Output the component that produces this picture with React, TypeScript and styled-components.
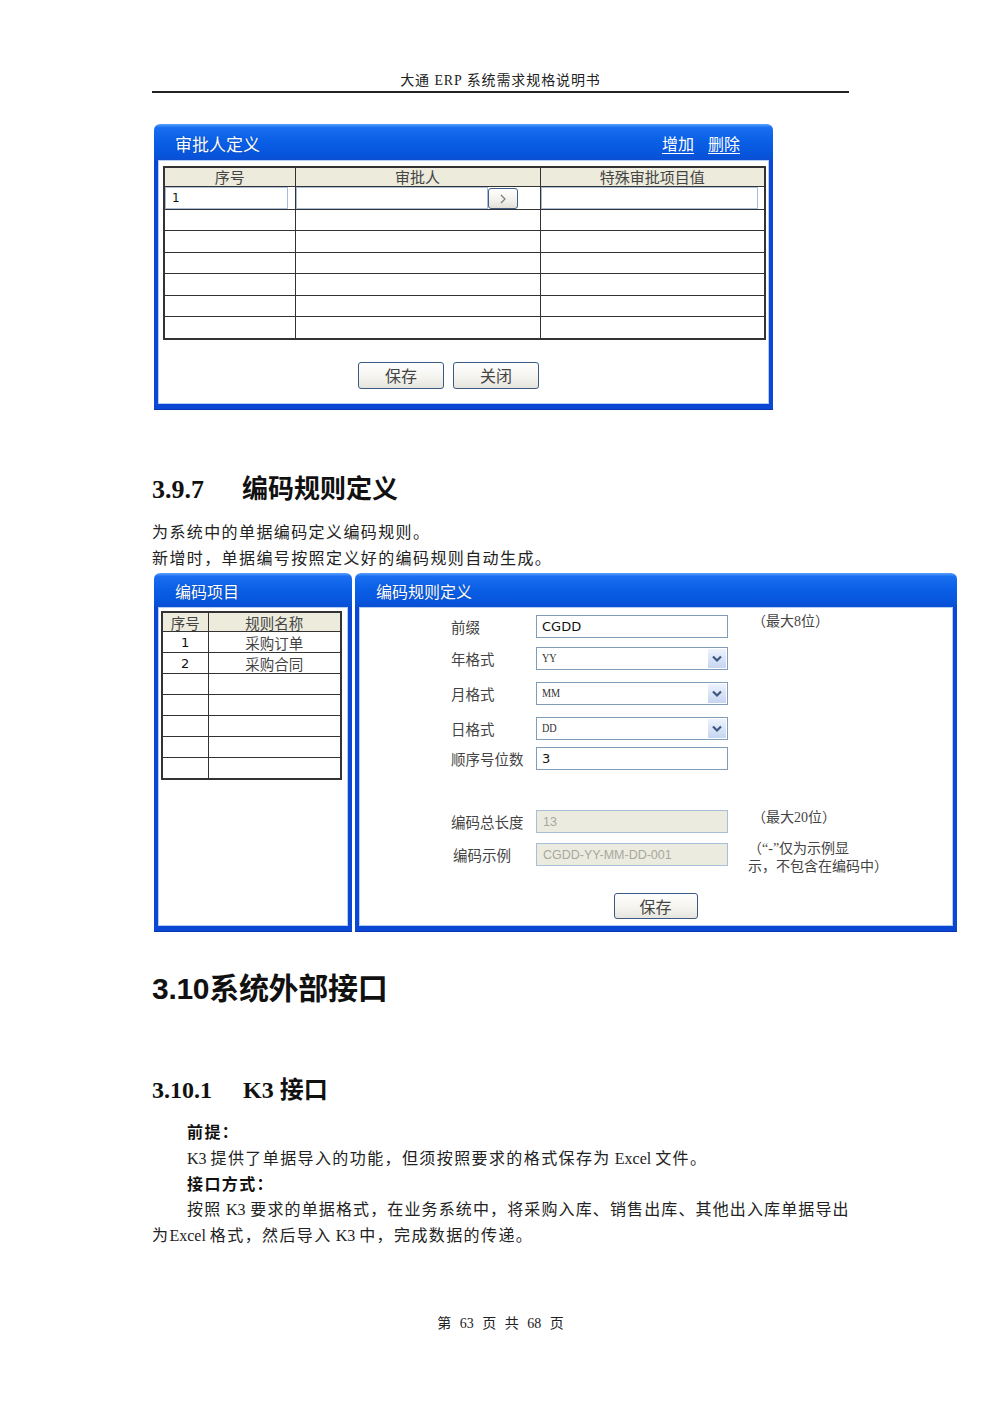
import * as React from 'react'
import styled, { createGlobalStyle } from 'styled-components'

const UI_FONT = `'Noto Sans CJK SC', 'Liberation Sans', sans-serif`
const DOC_FONT = `'Liberation Serif', 'Noto Sans CJK SC', serif`

const GlobalStyle = createGlobalStyle`
  html, body {
    margin: 0;
    padding: 0;
    background: #fff;
  }
  body {
    font-family: ${DOC_FONT};
    color: #111;
  }
`

export default function App() {
  return (
    <>
      <GlobalStyle />
      <Page>
        <RunningHead>大通 ERP 系统需求规格说明书</RunningHead>

        <ApproverWindow />

        <H3>
          <Num $w={90}>3.9.7</Num>编码规则定义
        </H3>
        <Para $mt={14}>为系统中的单据编码定义编码规则。</Para>
        <Para>新增时，单据编号按照定义好的编码规则自动生成。</Para>

        <CodeRuleWindows />

        <H2>3.10系统外部接口</H2>

        <H4>
          <Num $w={91}>3.10.1</Num>K3 接口
        </H4>

        <Body>
          <Label>前提：</Label>
          <Indented>
            <Lat>K3 </Lat>提供了单据导入的功能，但须按照要求的格式保存为<Lat> Excel </Lat>文件。
          </Indented>
          <Label>接口方式：</Label>
          <JustifiedLine>
            按照<Lat> K3 </Lat>要求的单据格式，在业务系统中，将采购入库、销售出库、其他出入库单据导出
          </JustifiedLine>
          <Line>
            为<Lat>Excel </Lat>格式，然后导入<Lat> K3 </Lat>中，完成数据的传递。
          </Line>
        </Body>

        <Footer>第 63 页 共 68 页</Footer>
      </Page>
    </>
  )
}

/* ---------- 审批人定义 ---------- */

const ApproverWindow = () => (
  <Window $w={619} $mt={31} $ml={2}>
    <TitleBar $h={36} $padR={33}>
      <TitleText $size={17}>审批人定义</TitleText>
      <TitleLinks>
        <TitleLink>增加</TitleLink>
        <TitleLink>删除</TitleLink>
      </TitleLinks>
    </TitleBar>
    <Frame>
      <WinBody $h={244}>
        <ApproverTable>
          <colgroup>
            <col style={{ width: 131 }} />
            <col style={{ width: 245 }} />
            <col style={{ width: 225 }} />
          </colgroup>
          <thead>
            <tr>
              <HeadCell>序号</HeadCell>
              <HeadCell>审批人</HeadCell>
              <HeadCell>特殊审批项目值</HeadCell>
            </tr>
          </thead>
          <tbody>
            <InputRow>
              <td>
                <CellInput readOnly defaultValue="1" $right={7} />
              </td>
              <td>
                <LookupWrap>
                  <CellInput readOnly defaultValue="" $right={0} />
                  <LookupButton>
                    <svg width="10" height="12" viewBox="0 0 10 12">
                      <path d="M3 2 L7 6 L3 10" fill="none" stroke="#7a7a7a" strokeWidth="1.2" />
                    </svg>
                  </LookupButton>
                  <LookupGap />
                </LookupWrap>
              </td>
              <td>
                <CellInput readOnly defaultValue="" $right={6} />
              </td>
            </InputRow>
            {[0, 1, 2, 3, 4, 5].map(i => (
              <EmptyRow key={i} $h={i % 2 === 0 ? 21 : 22}>
                <td />
                <td />
                <td />
              </EmptyRow>
            ))}
          </tbody>
        </ApproverTable>
        <ButtonRow>
          <PushButton $w={86} $h={27}>保存</PushButton>
          <PushButton $w={86} $h={27}>关闭</PushButton>
        </ButtonRow>
      </WinBody>
    </Frame>
  </Window>
)

/* ---------- 编码规则 ---------- */

const rules = [
  { no: '1', name: '采购订单' },
  { no: '2', name: '采购合同' }
]

const ChevronDown = () => (
  <svg width="12" height="10" viewBox="0 0 12 10">
    <path d="M2 2.5 L6 6.5 L10 2.5" fill="none" stroke="#3f5680" strokeWidth="2.2" />
  </svg>
)

const CodeRuleWindows = () => (
  <WindowPair>
    <Window $w={198} $mt={0}>
      <TitleBar $h={34} $padR={20}>
        <TitleText $size={16}>编码项目</TitleText>
      </TitleBar>
      <Frame>
        <WinBody $h={319}>
          <RuleTable>
            <colgroup>
              <col style={{ width: 46 }} />
              <col style={{ width: 133 }} />
            </colgroup>
            <thead>
              <tr>
                <RuleHead>序号</RuleHead>
                <RuleHead>规则名称</RuleHead>
              </tr>
            </thead>
            <tbody>
              {Array.from({ length: 7 }).map((_, i) => (
                <EmptyRow key={i} $h={21}>
                  <RuleNo>{rules[i] ? rules[i].no : ''}</RuleNo>
                  <RuleName>{rules[i] ? rules[i].name : ''}</RuleName>
                </EmptyRow>
              ))}
            </tbody>
          </RuleTable>
        </WinBody>
      </Frame>
    </Window>

    <Window $w={602} $mt={0}>
      <TitleBar $h={34} $padR={20}>
        <TitleText $size={16}>编码规则定义</TitleText>
      </TitleBar>
      <Frame>
        <WinBody $h={319}>
          <Form>
            <FieldRow $mt={0}>
              <FieldLabel>前缀</FieldLabel>
              <TextBox readOnly defaultValue="CGDD" />
              <Hint $mt={-1}>（最大8位）</Hint>
            </FieldRow>
            <FieldRow $mt={9}>
              <FieldLabel>年格式</FieldLabel>
              <SelectBox>
                <SelectText>YY</SelectText>
                <ArrowBox>
                  <ChevronDown />
                </ArrowBox>
              </SelectBox>
            </FieldRow>
            <FieldRow $mt={12}>
              <FieldLabel>月格式</FieldLabel>
              <SelectBox>
                <SelectText>MM</SelectText>
                <ArrowBox>
                  <ChevronDown />
                </ArrowBox>
              </SelectBox>
            </FieldRow>
            <FieldRow $mt={12}>
              <FieldLabel>日格式</FieldLabel>
              <SelectBox>
                <SelectText>DD</SelectText>
                <ArrowBox>
                  <ChevronDown />
                </ArrowBox>
              </SelectBox>
            </FieldRow>
            <FieldRow $mt={7}>
              <FieldLabel>顺序号位数</FieldLabel>
              <TextBox readOnly defaultValue="3" />
            </FieldRow>
            <FieldRow $mt={40}>
              <FieldLabel>编码总长度</FieldLabel>
              <DisabledBox readOnly defaultValue="13" />
              <Hint $mt={0}>（最大20位）</Hint>
            </FieldRow>
            <FieldRow $mt={10}>
              <FieldLabel $pad={2}>编码示例</FieldLabel>
              <DisabledBox readOnly defaultValue="CGDD-YY-MM-DD-001" />
              <Hint $mt={-3} $lh={18} $ml={20}>
                （“-”仅为示例显
                <br />
                示，不包含在编码中）
              </Hint>
            </FieldRow>
          </Form>
          <CenterRow>
            <PushButton $w={84} $h={26}>保存</PushButton>
          </CenterRow>
        </WinBody>
      </Frame>
    </Window>
  </WindowPair>
)

/* ---------- styles ---------- */

const Page = styled.div`
  width: 697px;
  padding: 0 151px 40px 152px;
`

const RunningHead = styled.div`
  margin-top: 72px;
  height: 18px;
  line-height: 18px;
  padding-bottom: 1px;
  font-size: 14px;
  letter-spacing: 0.9px;
  text-align: center;
  color: #222;
  border-bottom: 2px solid #222;
`

const Window = styled.div<{ $w: number; $mt: number; $ml?: number }>`
  flex: none;
  width: ${p => p.$w}px;
  margin-top: ${p => p.$mt}px;
  margin-left: ${p => p.$ml || 0}px;
  display: flex;
  flex-direction: column;
  font-family: ${UI_FONT};
`

const WindowPair = styled.div`
  display: flex;
  gap: 3px;
  width: 803px;
  margin-top: 1px;
  margin-left: 2px;
`

const TitleBar = styled.div<{ $h: number; $padR: number }>`
  height: ${p => p.$h}px;
  border-radius: 6px 6px 0 0;
  background: linear-gradient(
    180deg,
    #5aa2ff 0%,
    #1a6ef0 10%,
    #0a60e6 45%,
    #0756de 80%,
    #0a4fd4 100%
  );
  display: flex;
  align-items: center;
  justify-content: space-between;
  padding: 2px ${p => p.$padR}px 0 21px;
  box-sizing: border-box;
`

const TitleText = styled.span<{ $size: number }>`
  color: #fff;
  font-size: ${p => p.$size}px;
  text-shadow: 0 0 1px rgba(0, 20, 80, 0.5);
`

const TitleLinks = styled.div`
  display: flex;
  gap: 14px;
`

const TitleLink = styled.a`
  color: #fff;
  font-size: 16px;
  text-decoration: underline;
  text-underline-offset: 3px;
  cursor: pointer;
`

const Frame = styled.div`
  background: #0a47d4;
  padding: 0 4px 5px;
  border-bottom: 1px solid #0836b0;
`

const WinBody = styled.div<{ $h: number }>`
  height: ${p => p.$h}px;
  background: #fff;
  box-shadow: inset 0 0 0 1px #b4cdf2;
  box-sizing: border-box;
  overflow: hidden;
`

const ApproverTable = styled.table`
  margin: 6px 0 0 5px;
  width: 601px;
  table-layout: fixed;
  border-collapse: collapse;
  border: 2px solid #333;

  td {
    border: 1px solid #333;
    padding: 0;
  }
`

const HeadCell = styled.th`
  height: 18px;
  padding: 0;
  border: 1px solid #333;
  background: #ecebdc;
  font-weight: normal;
  font-size: 15px;
  line-height: 18px;
  color: #444;
`

const InputRow = styled.tr`
  height: 22px;
`

const EmptyRow = styled.tr<{ $h: number }>`
  height: ${p => p.$h}px;
`

const CellInput = styled.input<{ $right: number }>`
  display: block;
  box-sizing: border-box;
  width: calc(100% - ${p => p.$right}px);
  height: 22px;
  margin: 0;
  padding: 0 6px;
  border: 1px solid #a9bcd8;
  background: #fff;
  font-family: 'DejaVu Sans', 'Liberation Sans', sans-serif;
  font-size: 12px;
  color: #111;
  outline: none;
  flex: 1;
  min-width: 0;
`

const LookupWrap = styled.div`
  display: flex;
  align-items: stretch;
  height: 22px;
`

const LookupButton = styled.div`
  width: 30px;
  height: 21px;
  margin-top: 1px;
  box-sizing: border-box;
  border: 1px solid #3f5f88;
  border-radius: 3px;
  background: linear-gradient(180deg, #ffffff 0%, #f2f1ec 60%, #e2e0d8 100%);
  display: flex;
  align-items: center;
  justify-content: center;
`

const LookupGap = styled.div`
  width: 22px;
`

const ButtonRow = styled.div`
  display: flex;
  gap: 9px;
  margin-top: 22px;
  padding-left: 200px;
`

const CenterRow = styled.div`
  display: flex;
  justify-content: center;
  margin-top: 27px;
  padding-right: 1px;
`

const PushButton = styled.button<{ $w: number; $h: number }>`
  width: ${p => p.$w}px;
  height: ${p => p.$h}px;
  padding: 0;
  border: 1px solid #3a5a86;
  border-radius: 3px;
  background: linear-gradient(180deg, #ffffff 0%, #f5f4ef 55%, #e6e4dc 100%);
  font-family: ${UI_FONT};
  font-size: 16px;
  color: #444;
  line-height: 1;
`

const RuleTable = styled.table`
  margin: 4px 0 0 3px;
  width: 179px;
  table-layout: fixed;
  border-collapse: collapse;
  border: 2px solid #333;

  td {
    border: 1px solid #333;
    padding: 0;
  }
`

const RuleHead = styled.th`
  height: 18px;
  padding: 0;
  border: 1px solid #333;
  background: #ecebdc;
  font-weight: normal;
  font-size: 14.5px;
  line-height: 17px;
  color: #444;
`

const RuleNo = styled.td`
  text-align: center;
  font-family: 'DejaVu Sans', 'Liberation Sans', sans-serif;
  font-size: 13px;
  line-height: 17px;
  color: #111;
`

const RuleName = styled.td`
  text-align: center;
  font-size: 14.5px;
  line-height: 17px;
  color: #444;
`

const Form = styled.div`
  padding: 8px 0 0 92px;
  display: flex;
  flex-direction: column;
`

const FieldRow = styled.div<{ $mt: number }>`
  display: flex;
  align-items: center;
  height: 23px;
  margin-top: ${p => p.$mt}px;
`

const FieldLabel = styled.span<{ $pad?: number }>`
  width: 85px;
  padding-left: ${p => p.$pad || 0}px;
  box-sizing: border-box;
  font-size: 14.5px;
  color: #444;
  white-space: nowrap;
`

const boxBase = `
  box-sizing: border-box;
  width: 192px;
  height: 23px;
  margin: 0;
  outline: none;
`

const TextBox = styled.input`
  ${boxBase}
  padding: 0 5px;
  border: 1px solid #7f9db9;
  background: #fff;
  font-family: 'DejaVu Sans', 'Liberation Sans', sans-serif;
  font-size: 13px;
  color: #111;
`

const DisabledBox = styled.input`
  ${boxBase}
  padding: 0 6px;
  border: 1px solid #a9bfd8;
  background: #ecebdf;
  font-family: 'Liberation Sans', sans-serif;
  font-size: 12.5px;
  color: #a8a8a0;
`

const SelectBox = styled.div`
  ${boxBase}
  border: 1px solid #7f9db9;
  background: #fff;
  display: flex;
  align-items: center;
  justify-content: space-between;
  padding: 1px 1px 1px 5px;
`

const SelectText = styled.span`
  font-family: 'Liberation Serif', serif;
  font-size: 12px;
  transform: scaleX(0.85);
  transform-origin: left center;
  color: #333;
`

const ArrowBox = styled.div`
  width: 18px;
  height: 19px;
  background: linear-gradient(180deg, #eef3fd 0%, #d6e1f6 60%, #c6d5f1 100%);
  display: flex;
  align-items: center;
  justify-content: center;
`

const Hint = styled.span<{ $mt: number; $lh?: number; $ml?: number }>`
  align-self: flex-start;
  margin-top: ${p => p.$mt}px;
  margin-left: ${p => (p.$ml !== undefined ? p.$ml : 24)}px;
  font-family: ${DOC_FONT};
  font-size: 14px;
  line-height: ${p => p.$lh || 16}px;
  color: #444;
  white-space: nowrap;
`

const Num = styled.span<{ $w: number }>`
  display: inline-block;
  width: ${p => p.$w}px;
`

const H3 = styled.h3`
  margin: 64px 0 0;
  font-size: 26px;
  line-height: 32px;
  font-weight: bold;
  color: #111;
`

const H2 = styled.h2`
  margin: 39px 0 0;
  font-family: 'Liberation Sans', 'Noto Sans CJK SC', sans-serif;
  font-size: 30px;
  line-height: 36px;
  font-weight: bold;
  letter-spacing: -0.3px;
  color: #111;
`

const H4 = styled.h4`
  margin: 68px 0 0;
  font-size: 24px;
  line-height: 30px;
  font-weight: bold;
  color: #111;
`

const Para = styled.p<{ $mt?: number }>`
  margin: ${p => p.$mt || 0}px 0 0;
  font-size: 16px;
  line-height: 26px;
  letter-spacing: 1.4px;
  color: #222;
`

const Body = styled.div`
  margin-top: 15px;
  font-size: 16px;
  line-height: 25.8px;
  letter-spacing: 1.4px;
  color: #222;
`

const Label = styled.div`
  padding-left: 35px;
  font-weight: bold;
  color: #111;
`

const Indented = styled.div`
  padding-left: 35px;
`

const JustifiedLine = styled.div`
  padding-left: 35px;
  letter-spacing: 0.4px;
  text-align: justify;
  text-align-last: justify;
`

const Line = styled.div``

const Lat = styled.span`
  letter-spacing: 0;
`

const Footer = styled.div`
  margin-top: 66px;
  font-size: 14px;
  line-height: 18px;
  word-spacing: 5px;
  text-align: center;
  color: #222;
`
